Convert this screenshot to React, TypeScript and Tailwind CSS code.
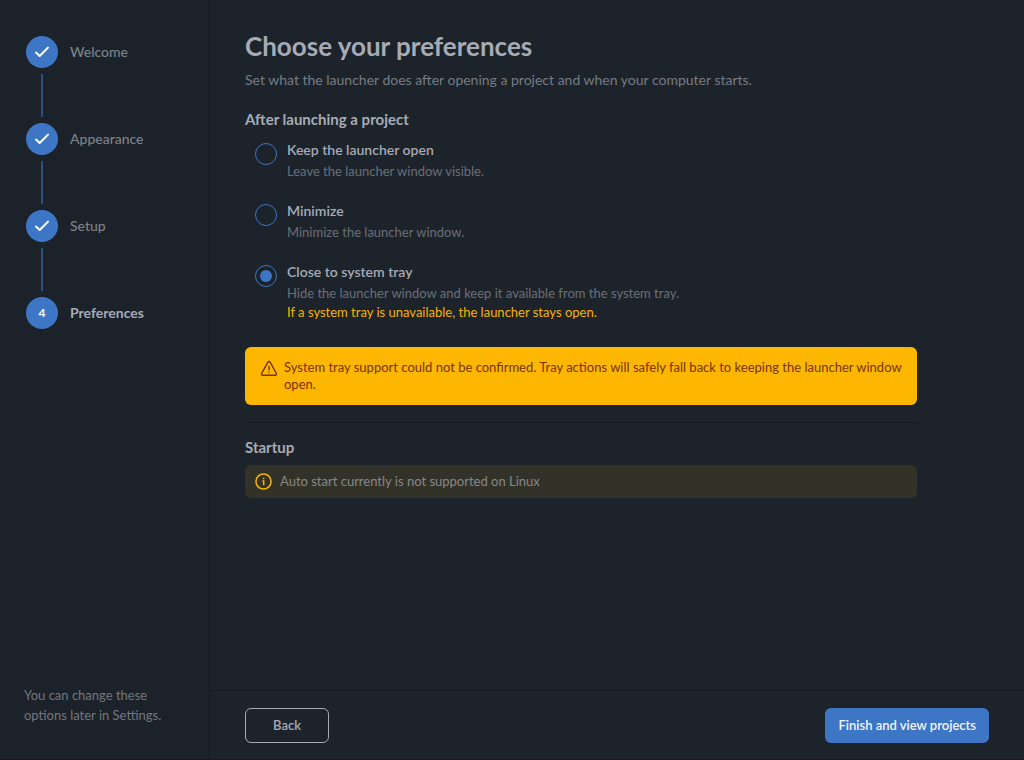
import { useState } from "react";

const steps = ["Welcome", "Appearance", "Setup", "Preferences"];

const launchOptions = [
  {
    id: "keep",
    label: "Keep the launcher open",
    hint: "Leave the launcher window visible.",
  },
  {
    id: "minimize",
    label: "Minimize",
    hint: "Minimize the launcher window.",
  },
  {
    id: "tray",
    label: "Close to system tray",
    hint: "Hide the launcher window and keep it available from the system tray.",
    note: "If a system tray is unavailable, the launcher stays open.",
  },
];

const CheckIcon = () => (
  <svg width="16" height="16" viewBox="0 0 16 16" fill="none" stroke="currentColor" strokeWidth="2" strokeLinecap="round" strokeLinejoin="round" aria-hidden="true">
    <path d="M2 8.6 5.7 12 14 3.6" />
  </svg>
);

const WarningIcon = () => (
  <svg className="shrink-0" width="18" height="18" viewBox="0 0 18 18" fill="none" stroke="currentColor" strokeWidth="1.4" strokeLinecap="round" strokeLinejoin="round" aria-hidden="true">
    <path d="M7.9 3.2 1.6 14.5A1.2 1.2 0 0 0 2.7 16.3H15.3A1.2 1.2 0 0 0 16.4 14.5L10.1 3.2A1.25 1.25 0 0 0 7.9 3.2Z" />
    <path d="M9 7.4V10.8M9 13.3V13.4" />
  </svg>
);

const InfoIcon = () => (
  <svg className="shrink-0 text-[#f5b301]" width="17" height="17" viewBox="0 0 18 18" fill="none" stroke="currentColor" strokeWidth="1.6" aria-hidden="true">
    <circle cx="9" cy="9" r="8" />
    <path d="M7.8 8.4H9.2V13M9.1 4.9V6.6" />
  </svg>
);

const Sidebar = ({ current }: { current: number }) => {
  return (
    <aside className="flex w-[210px] shrink-0 flex-col justify-between border-r border-[#15191e] bg-[#1c2229] pt-9 pr-6 pb-[34px] pl-6">
      <ol className="flex flex-col pl-0.5">
        {steps.map((step, i) => (
          <li key={step}>
            <div className="flex items-center gap-3">
              <span className="flex size-8 items-center justify-center rounded-full bg-[#3d76c4] text-xs font-bold text-white">
                {i < current ? <CheckIcon /> : i + 1}
              </span>
              <span
                className={
                  i === current
                    ? "text-sm font-bold text-[#a6abb6]"
                    : "text-sm font-medium text-[#7d828c]"
                }
              >
                {step}
              </span>
            </div>
            {i < steps.length - 1 && (
              <div className="my-1.5 ml-[15px] h-[43px] w-0.5 bg-[#2c4f7f]" />
            )}
          </li>
        ))}
      </ol>
      <p className="text-[13px]/5 text-[#72777f]">
        You can change these
        <br />
        options later in Settings.
      </p>
    </aside>
  );
};

const App = () => {
  const [afterLaunch, setAfterLaunch] = useState("tray");

  return (
    <div className="flex min-h-screen border-b border-[#1a1620] bg-[#1d232a] font-['Lato',sans-serif] text-[#a6abb6]">
      <Sidebar current={3} />
      <div className="flex min-w-0 flex-1 flex-col">
        <main className="flex-1 px-[35px] pt-[30px]">
          <div className="max-w-2xl">
            <h1 className="text-[26px]/8 font-bold">Choose your preferences</h1>
            <p className="mt-2 text-sm text-[#777c85]">
              Set what the launcher does after opening a project and when your computer starts.
            </p>

            <fieldset className="mt-[19px]">
              <legend className="text-[15px]/5 font-bold">After launching a project</legend>
              <div className="mt-[11px] flex flex-col gap-5 pl-2.5">
                {launchOptions.map((option) => (
                  <div key={option.id} className="flex gap-2.5">
                    <input
                      type="radio"
                      name="after-launch"
                      id={option.id}
                      checked={afterLaunch === option.id}
                      onChange={() => setAfterLaunch(option.id)}
                      className="mt-[3px] grid size-[22px] shrink-0 appearance-none place-content-center rounded-full border border-[#3d76c4] checked:before:size-3 checked:before:rounded-full checked:before:bg-[#3d76c4]"
                    />
                    <div>
                      <label htmlFor={option.id} className="block text-sm/5 font-semibold">
                        {option.label}
                      </label>
                      <p className="mt-0.5 text-[13px]/[19px] text-[#6a6f78]">{option.hint}</p>
                      {option.note && (
                        <p className="text-[13px]/[19px] text-[#f5b301]">{option.note}</p>
                      )}
                    </div>
                  </div>
                ))}
              </div>
            </fieldset>

            <div role="alert" className="mt-[25px] flex gap-1.5 rounded-md bg-[#fdb700] py-3 pr-3 pl-[15px] text-[13px]/[17px] text-[#793205]">
              <WarningIcon />
              <p>
                System tray support could not be confirmed. Tray actions will safely fall back to keeping the launcher window open.
              </p>
            </div>

            <section className="mt-[17px] border-t border-[#15191e] pt-3.5">
              <h2 className="text-[15px]/5 font-bold">Startup</h2>
              <div className="mt-2 flex items-center gap-2 rounded-md bg-[#333228] px-2.5 py-2 text-[13px]/[17px] text-[#86888a]">
                <InfoIcon />
                <p>Auto start currently is not supported on Linux</p>
              </div>
            </section>
          </div>
        </main>
        <footer className="flex justify-between border-t border-[#15191e] px-[35px] pt-[17px] pb-4">
          <button className="h-[35px] rounded-md border border-[#a6abb6] px-[27px] text-[13px] font-semibold">
            Back
          </button>
          <button className="h-[35px] rounded-md bg-[#3d76c4] px-[13px] text-[13px] font-semibold text-[#f1f5fb]">
            Finish and view projects
          </button>
        </footer>
      </div>
    </div>
  );
};

export default App;
